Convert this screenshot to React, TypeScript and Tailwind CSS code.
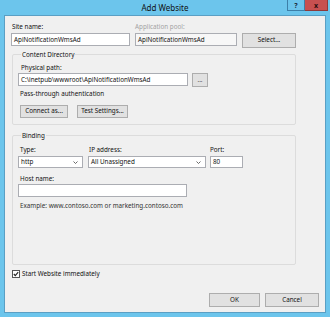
import React from "react";

// small helpers so the dialog stays readable
function Label({ children, className = "" }: { children?: React.ReactNode; className?: string }) {
  return (
    <div className={`h-[9px] leading-[9px] text-[6.3px] whitespace-nowrap ${className}`}>{children}</div>
  );
}

function TextBox({ value = "", className = "" }: { value?: string; className?: string }) {
  return (
    <div
      className={`h-[13px] bg-white border border-[#abadb3] px-[2px] flex items-center text-[6.3px] whitespace-nowrap overflow-hidden ${className}`}
    >
      {value}
    </div>
  );
}

function Btn({ children, className = "" }: { children: React.ReactNode; className?: string }) {
  return (
    <button
      className={`bg-[#e1e1e1] border border-[#adadad] text-[6.3px] leading-none flex items-center justify-center text-[#111] ${className}`}
    >
      {children}
    </button>
  );
}

function Select({ value, className = "" }: { value: string; className?: string }) {
  return (
    <div
      className={`h-[12px] bg-white border border-[#abadb3] pl-[2px] pr-[4px] flex items-center justify-between text-[6.3px] ${className}`}
    >
      <span>{value}</span>
      <svg width="5" height="3" viewBox="0 0 5 3">
        <path d="M0.5 0.5 L2.5 2.5 L4.5 0.5" fill="none" stroke="#444" strokeWidth="0.8" />
      </svg>
    </div>
  );
}

export default function App() {
  return (
    <div className="w-[330px] h-[317px] bg-[#6cc5ec] flex flex-col font-['Noto_Sans',sans-serif] text-[#111]">
      {/* title bar */}
      <div className="h-[15px] flex">
        <div className="w-[43px]" />
        <div className="flex-1 text-center text-[8px] leading-[15px] text-[#111]">Add Website</div>
        <div className="w-[43px] flex items-start">
          <div className="w-[18px] h-[11px] border border-t-0 border-[#3d7fa8] flex items-center justify-center text-[7px] font-bold leading-none text-[#1a2a3a]">
            ?
          </div>
          <div className="w-[23px] h-[11px] bg-[#c75050] border border-t-0 border-l-0 border-[#8f3a3a] flex items-center justify-center text-[7px] font-bold leading-none text-[#2a0e0e]">
            x
          </div>
        </div>
      </div>

      {/* client area */}
      <div className="flex-1 mx-[4px] mb-[4px] border border-[#5a9fc4] bg-[#f0f0f0] px-[6px] flex flex-col">
        {/* site name / app pool */}
        <div className="flex pt-[6px]">
          <div className="w-[119px]">
            <Label className="pl-[1px]">Site name:</Label>
            <TextBox value="ApiNotificationWmsAd" className="mt-[2px]" />
          </div>
          <div className="w-[102px] ml-[5px]">
            <Label className="text-[#a3a3a3]">Application pool:</Label>
            <TextBox value="ApiNotificationWmsAd" className="mt-[2px] !bg-[#f7f7f7]" />
          </div>
          <div className="w-[54px] ml-[5px] pt-[11px]">
            <Btn className="w-[54px] h-[15px]">Select...</Btn>
          </div>
        </div>

        {/* content directory */}
        <fieldset className="mt-[2px] ml-[1px] w-[284px] h-[75px] border border-[#dcdcdc] rounded-[2px] pl-[5px]">
          <legend className="ml-[3px] px-[1px] h-[9px] leading-[9px] text-[6.3px]">Content Directory</legend>
          <Label className="mt-[4px] pl-[3px]">Physical path:</Label>
          <div className="flex mt-[1px]">
            <TextBox value="C:\inetpub\wwwroot\ApiNotificationWmsAd" className="w-[170px]" />
            <Btn className="ml-[4px] w-[16px] h-[14px] text-[#555]">...</Btn>
          </div>
          <Label className="mt-[2px] pl-[2px]">Pass-through authentication</Label>
          <div className="flex mt-[7px] pl-[2px] gap-[9px]">
            <Btn className="w-[48px] h-[13px]">Connect as...</Btn>
            <Btn className="w-[51px] h-[13px]">Test Settings...</Btn>
          </div>
        </fieldset>

        {/* binding */}
        <fieldset className="mt-[6px] ml-[1px] w-[284px] h-[134px] border border-[#dcdcdc] rounded-[2px] pl-[5px]">
          <legend className="ml-[3px] px-[1px] h-[9px] leading-[9px] text-[6.3px]">Binding</legend>
          <div className="flex mt-[5px]">
            <div className="w-[65px]">
              <Label className="pl-[2px]">Type:</Label>
              <Select value="http" className="mt-[2px]" />
            </div>
            <div className="w-[118px] ml-[5px]">
              <Label className="pl-[1px]">IP address:</Label>
              <Select value="All Unassigned" className="mt-[2px]" />
            </div>
            <div className="w-[33px] ml-[4px]">
              <Label>Port:</Label>
              <div className="mt-[2px] h-[12px] bg-white border border-[#abadb3] px-[2px] flex items-center text-[6.3px]">
                80
              </div>
            </div>
          </div>
          <Label className="mt-[6px] pl-[2px]">Host name:</Label>
          <TextBox className="mt-[1px] w-[169px]" />
          <Label className="mt-[4px] pl-[2px] text-[#333]">Example: www.contoso.com or marketing.contoso.com</Label>
        </fieldset>

        {/* start immediately */}
        <div className="flex items-center mt-[4px] ml-[1px] h-[9px]">
          <div className="w-[8px] h-[8px] border border-[#555] bg-white flex items-center justify-center">
            <svg width="6" height="6" viewBox="0 0 6 6">
              <path d="M0.8 3 L2.3 4.6 L5.2 1.2" fill="none" stroke="#222" strokeWidth="1.1" />
            </svg>
          </div>
          <span className="ml-[2px] text-[6.3px] leading-[9px]">Start Website immediately</span>
        </div>

        {/* ok / cancel */}
        <div className="mt-auto pb-[5px] flex justify-end gap-[5px]">
          <Btn className="w-[51px] h-[14px]">OK</Btn>
          <Btn className="w-[54px] h-[14px]">Cancel</Btn>
        </div>
      </div>
    </div>
  );
}
